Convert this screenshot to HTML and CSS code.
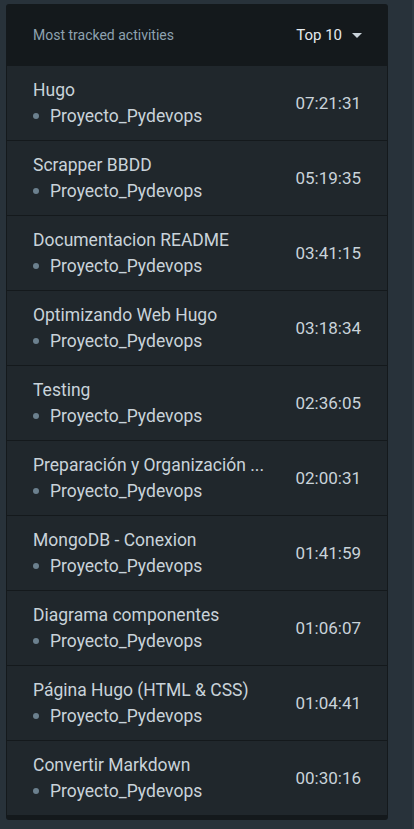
FILE: index.html
```html
<!DOCTYPE html>
<html lang="es">
<head>
<meta charset="utf-8">
<link rel="stylesheet" href="styles.css">
</head>
<body>
<div class="page">
  <section class="card">
    <header class="card-head">
      <span class="head-title">Most tracked activities</span>
      <span class="head-select">Top 10
        <svg class="caret" width="10" height="5" viewBox="0 0 10 5"><path d="M0 0h10L5 5z" fill="#c9d3da"/></svg>
      </span>
    </header>
    <ul class="list">
      <li class="row"><div class="info"><div class="name">Hugo</div><div class="proj"><span class="dot"></span>Proyecto_Pydevops</div></div><div class="time">07:21:31</div></li>
      <li class="row"><div class="info"><div class="name">Scrapper BBDD</div><div class="proj"><span class="dot"></span>Proyecto_Pydevops</div></div><div class="time">05:19:35</div></li>
      <li class="row"><div class="info"><div class="name">Documentacion README</div><div class="proj"><span class="dot"></span>Proyecto_Pydevops</div></div><div class="time">03:41:15</div></li>
      <li class="row"><div class="info"><div class="name">Optimizando Web Hugo</div><div class="proj"><span class="dot"></span>Proyecto_Pydevops</div></div><div class="time">03:18:34</div></li>
      <li class="row"><div class="info"><div class="name">Testing</div><div class="proj"><span class="dot"></span>Proyecto_Pydevops</div></div><div class="time">02:36:05</div></li>
      <li class="row"><div class="info"><div class="name">Preparación y Organización ...</div><div class="proj"><span class="dot"></span>Proyecto_Pydevops</div></div><div class="time">02:00:31</div></li>
      <li class="row"><div class="info"><div class="name">MongoDB - Conexion</div><div class="proj"><span class="dot"></span>Proyecto_Pydevops</div></div><div class="time">01:41:59</div></li>
      <li class="row"><div class="info"><div class="name">Diagrama componentes</div><div class="proj"><span class="dot"></span>Proyecto_Pydevops</div></div><div class="time">01:06:07</div></li>
      <li class="row"><div class="info"><div class="name">Página Hugo (HTML &amp; CSS)</div><div class="proj"><span class="dot"></span>Proyecto_Pydevops</div></div><div class="time">01:04:41</div></li>
      <li class="row"><div class="info"><div class="name">Convertir Markdown</div><div class="proj"><span class="dot"></span>Proyecto_Pydevops</div></div><div class="time">00:30:16</div></li>
    </ul>
  </section>
</div>
</body>
</html>
```

FILE: styles.css
```css
html, body {
  margin: 0;
  padding: 0;
  background: #28323a;
  height: 100%;
}
body {
  box-shadow: inset -2px 0 0 #2f3a42;
}
.page {
  padding: 4px 0 0 6px;
  font-family: Roboto, "Liberation Sans", sans-serif;
}
.card {
  width: 382px;
  background: #14191c;
  border-radius: 3px;
  padding-bottom: 5px;
  box-sizing: border-box;
}
.card-head {
  height: 62px;
  display: flex;
  align-items: center;
  justify-content: space-between;
  padding: 0 26px 0 27px;
}
.head-title {
  font-size: 14px;
  color: #8ea2b0;
}
.head-select {
  font-size: 15px;
  color: #e4eaee;
  display: flex;
  align-items: center;
  gap: 10px;
}
.caret { display: block; }
.list {
  list-style: none;
  margin: 0;
  padding: 0 1px;
}
.row {
  display: flex;
  align-items: center;
  justify-content: space-between;
  height: 74px;
  background: #20272c;
  margin-bottom: 1px;
  padding: 0 26px;
  box-sizing: border-box;
}
.row:last-child { margin-bottom: 0; }
.name, .proj {
  font-size: 17.5px;
  line-height: 26px;
  color: #c9d3da;
  white-space: nowrap;
}
.proj {
  display: flex;
  align-items: center;
}
.dot {
  width: 6px;
  height: 6px;
  border-radius: 50%;
  background: #6b808e;
  margin: 0 11px 0 0;
}
.time {
  font-size: 17px;
  color: #c9d3da;
}
```
